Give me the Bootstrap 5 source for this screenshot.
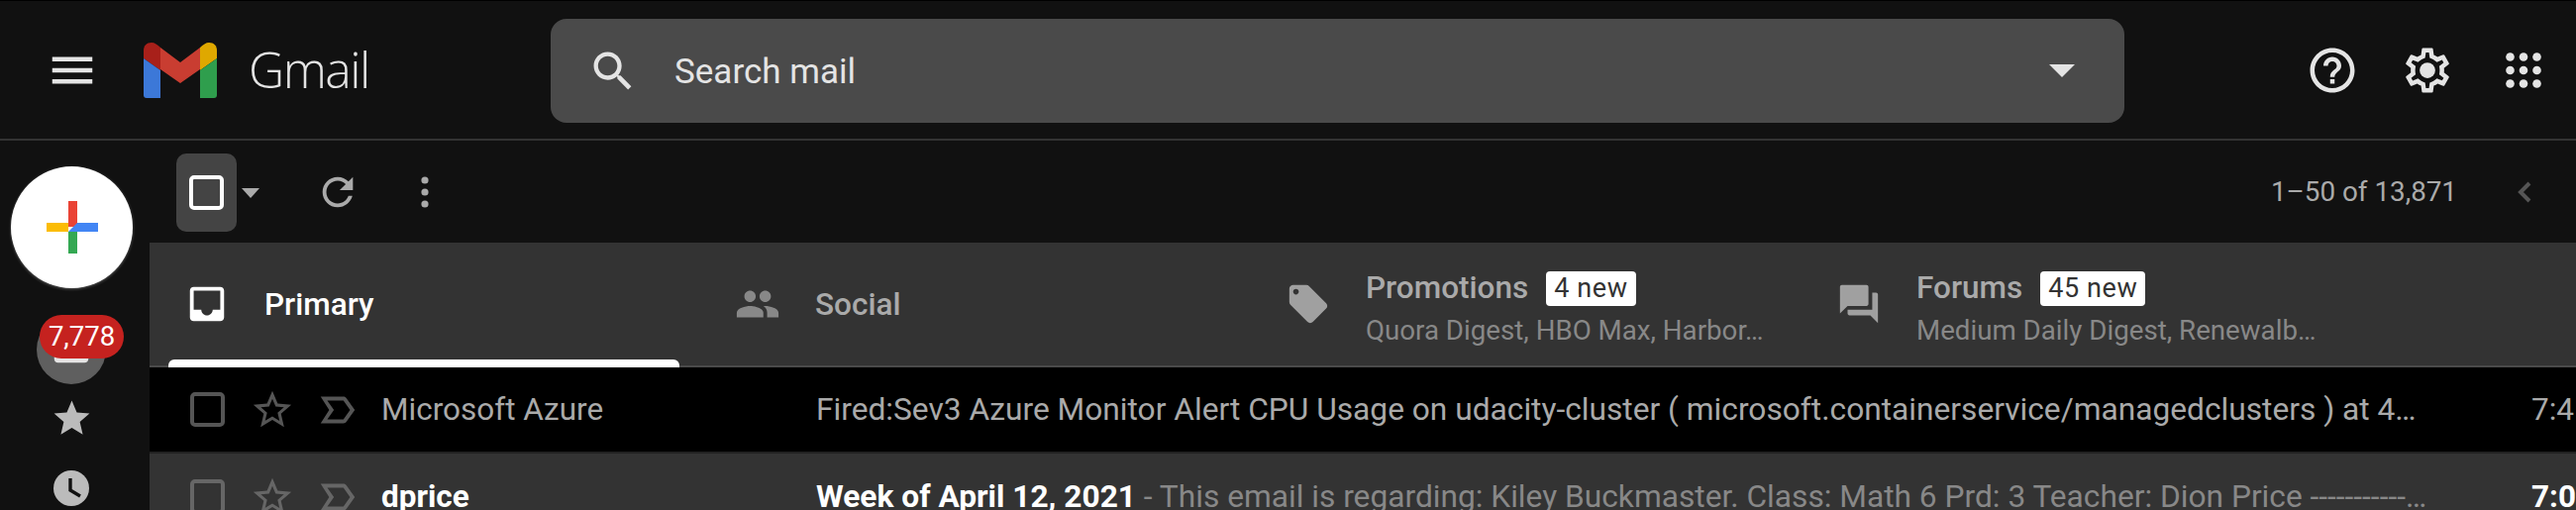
<!DOCTYPE html>
<html lang="en">
<head>
    <meta charset="UTF-8">
    <meta name="viewport" content="width=device-width, initial-scale=1.0">
    <title>Gmail</title>
    <link rel="stylesheet" href="https://cdn.jsdelivr.net/npm/bootstrap@5.3.0/dist/css/bootstrap.min.css">
    <style>
        html, body { height: 515px; overflow: hidden; }
        body { background: #111; font-family: Roboto, "Liberation Sans", sans-serif; color: #aaa; }
        svg { flex: none; display: block; }
        .top-bar { height: 142px; border-bottom: 2px solid #333; border-top: 1px solid #000; padding-left: 46px; }
        .brand-logo { margin-left: 45px; }
        .brand-name { margin-left: 32px; width: 305px; font-family: "Open Sans", sans-serif; font-size: 50px; font-weight: 300; letter-spacing: -1.5px; color: #e4e4e4; }
        .search-box { flex: none; width: 1589px; height: 105px; margin-top: 2px; background: #4a4a4a; border-radius: 16px; padding-left: 37px; padding-right: 50px; }
        .search-label { margin-left: 36px; padding-top: 3px; font-size: 35px; color: #e4e4e4; }
        .caret-down { width: 0; height: 0; border-left: 13px solid transparent; border-right: 13px solid transparent; border-top: 13px solid #e4e4e4; }
        .top-icons { margin-left: 183px; }
        .icon-gear { margin-left: 42px; }
        .icon-grid { margin-left: 52px; }
        .side-col { flex: none; width: 151px; }
        .compose-btn { width: 123px; height: 123px; margin: 26px 0 0 11px; border-radius: 50%; background: #fff; box-shadow: 0 1px 3px rgba(255,255,255,.3); }
        .side-inbox { width: 70px; height: 70px; margin: 27px 0 0 37px; border-radius: 50%; background: #5f5f5f; position: relative; }
        .count-pill { position: absolute; left: 3px; top: 0; width: 85px; height: 44px; border-radius: 22px; background: #c5221f; color: #fff; font-size: 27.5px; line-height: 44px; text-align: center; }
        .side-star { margin: 13px 0 0 51px; }
        .side-clock { margin: 31px 0 0 54px; }
        .mail-pane { min-width: 0; }
        .tool-bar { height: 103px; padding-right: 45px; }
        .select-wrap { width: 61px; height: 79px; margin: 13px 0 0 27px; background: #444; border-radius: 10px; }
        .caret-small { width: 0; height: 0; margin-left: 5px; margin-top: 2px; border-left: 9px solid transparent; border-right: 9px solid transparent; border-top: 10px solid #aaa; }
        .tool-refresh { margin-left: 56px; }
        .tool-dots { margin-left: 61px; }
        .page-count { font-size: 27.8px; color: #aaa; margin-right: 60px; }
        .tab-strip { height: 126px; background: #333; border-bottom: 2px solid #4a4a4a; }
        .tab-item { flex: none; width: 556px; height: 124px; padding-left: 41px; position: relative; color: #aaa; }
        .tab-item svg { margin-left: -6px; }
        .tab-text { position: absolute; left: 116px; top: 28px; }
        .tab-solo { top: 45px; }
        .tab-title { font-size: 31.5px; line-height: 36px; font-weight: 500; white-space: nowrap; }
        .tab-active .tab-title { color: #fff; }
        .tab-sub { font-size: 27.7px; line-height: 32px; margin-top: 9px; color: #888; white-space: nowrap; }
        .new-pill { display: inline-block; margin-left: 18px; padding: 0 8px; height: 35px; line-height: 35px; font-size: 27px; font-weight: 400; letter-spacing: .6px; background: #fff; color: #333; border-radius: 4px; vertical-align: 1px; }
        .tab-bar-line { position: absolute; left: 19px; bottom: -2px; width: 516px; height: 8px; background: #fff; border-radius: 6px 6px 0 0; }
        .mail-line { height: 87px; padding-left: 41px; font-size: 31.5px; white-space: nowrap; overflow: hidden; }
        .mail-read { background: #000; border-bottom: 2px solid #222; color: #aaa; }
        .mail-new { background: #333; color: #888; }
        .mail-new b { color: #fff; font-weight: 700; }
        .cell-star { margin-left: 25px; }
        .cell-mark { margin-left: 20px; }
        .cell-from { flex: none; margin-left: 21px; width: 439px; }
        .cell-subject { flex: none; width: 1732px; font-size: 31.7px; }
    </style>
</head>
<body>
    <header class="top-bar d-flex align-items-center">
        <svg width="54" height="54" viewBox="0 0 24 24" fill="#e4e4e4"><path d="M3 18h18v-2H3v2zm0-5h18v-2H3v2zm0-7v2h18V6H3z"/></svg>
        <svg class="brand-logo" width="74" height="56" viewBox="0 0 74 56">
            <path d="M17 5 37 20 57 5V27L37 41 17 27z" fill="#c93d31"/>
            <path d="M0 16V8C0 3 3 0 8 0 11 0 14 2 17 5V28z" fill="#a8201a"/>
            <path d="M74 16V8C74 3 71 0 66 0 63 0 60 2 57 5V28z" fill="#dfa800"/>
            <path d="M0 16 17 28V56H3C1 56 0 55 0 53z" fill="#3c78d8"/>
            <path d="M74 16 57 28V56H71C73 56 74 55 74 53z" fill="#2f9e4d"/>
        </svg>
        <div class="brand-name">Gmail</div>
        <div class="search-box d-flex align-items-center">
            <svg width="52" height="52" viewBox="0 0 24 24" fill="#e4e4e4"><path d="M15.5 14h-.79l-.28-.27C15.41 12.59 16 11.11 16 9.5 16 5.91 13.09 3 9.5 3S3 5.91 3 9.5 5.91 16 9.5 16c1.61 0 3.09-.59 4.23-1.57l.27.28v.79l5 4.99L20.49 19l-4.99-5zm-6 0C7.01 14 5 11.99 5 9.5S7.01 5 9.5 5 14 7.01 14 9.5 11.99 14 9.5 14z"/></svg>
            <span class="search-label flex-grow-1">Search mail</span>
            <span class="caret-down"></span>
        </div>
        <div class="top-icons d-flex align-items-center">
            <svg width="54" height="54" viewBox="0 0 24 24" fill="#e4e4e4"><path d="M11 18h2v-2h-2v2zm1-16C6.48 2 2 6.48 2 12s4.48 10 10 10 10-4.48 10-10S17.52 2 12 2zm0 18c-4.41 0-8-3.59-8-8s3.59-8 8-8 8 3.59 8 8-3.59 8-8 8zm0-14c-2.21 0-4 1.79-4 4h2c0-1.1.9-2 2-2s2 .9 2 2c0 2-3 1.75-3 5h2c0-2.25 3-2.5 3-5 0-2.21-1.79-4-4-4z"/></svg>
            <svg class="icon-gear" width="54" height="54" viewBox="0 0 24 24" fill="#e4e4e4"><path d="M19.43 12.98c.04-.32.07-.64.07-.98 0-.34-.03-.66-.07-.98l2.11-1.65c.19-.15.24-.42.12-.64l-2-3.46c-.09-.16-.26-.25-.44-.25-.06 0-.12.01-.17.03l-2.49 1c-.52-.4-1.08-.73-1.69-.98l-.38-2.65C14.46 2.18 14.25 2 14 2h-4c-.25 0-.46.18-.49.42l-.38 2.65c-.61.25-1.17.59-1.69.98l-2.49-1c-.06-.02-.12-.03-.18-.03-.17 0-.34.09-.43.25l-2 3.46c-.13.22-.07.49.12.64l2.11 1.65c-.04.32-.07.65-.07.98 0 .33.03.66.07.98l-2.11 1.65c-.19.15-.24.42-.12.64l2 3.46c.09.16.26.25.44.25.06 0 .12-.01.17-.03l2.49-1c.52.4 1.08.73 1.69.98l.38 2.65c.03.24.24.42.49.42h4c.25 0 .46-.18.49-.42l.38-2.65c.61-.25 1.17-.59 1.69-.98l2.49 1c.06.02.12.03.18.03.17 0 .34-.09.43-.25l2-3.46c.12-.22.07-.49-.12-.64l-2.11-1.65zm-1.98-1.71c.04.31.05.52.05.73 0 .21-.02.43-.05.73l-.14 1.13.89.7 1.08.84-.7 1.21-1.27-.51-1.04-.42-.9.68c-.43.32-.84.56-1.25.73l-1.06.43-.16 1.13-.2 1.35h-1.4l-.19-1.35-.16-1.13-1.06-.43c-.43-.18-.83-.41-1.23-.71l-.91-.7-1.06.43-1.27.51-.7-1.21 1.08-.84.89-.7-.14-1.13c-.03-.31-.05-.54-.05-.74s.02-.43.05-.73l.14-1.13-.89-.7-1.08-.84.7-1.21 1.27.51 1.04.42.9-.68c.43-.32.84-.56 1.25-.73l1.06-.43.16-1.13.2-1.35h1.39l.19 1.35.16 1.13 1.06.43c.43.18.83.41 1.23.71l.91.7 1.06-.43 1.27-.51.7 1.21-1.07.85-.89.7.14 1.13z"/><circle cx="12" cy="12" r="3.5"/></svg>
            <svg class="icon-grid" width="36" height="36" viewBox="0 0 36 36" fill="#e4e4e4"><circle cx="4.5" cy="4.5" r="4.3"/><circle cx="18" cy="4.5" r="4.3"/><circle cx="31.5" cy="4.5" r="4.3"/><circle cx="4.5" cy="18" r="4.3"/><circle cx="18" cy="18" r="4.3"/><circle cx="31.5" cy="18" r="4.3"/><circle cx="4.5" cy="31.5" r="4.3"/><circle cx="18" cy="31.5" r="4.3"/><circle cx="31.5" cy="31.5" r="4.3"/></svg>
        </div>
    </header>

    <div class="d-flex">
        <aside class="side-col">
            <div class="compose-btn d-flex align-items-center justify-content-center">
                <svg width="52" height="53" viewBox="0 0 52 53">
                    <path d="M22 0h9v26h-9z" fill="#ea4335"/>
                    <path d="M31 22h21v9H22z" fill="#4285f4"/>
                    <path d="M22 31h9v22h-9z" fill="#34a853"/>
                    <path d="M0 22h22v9H0z" fill="#fbbc05"/>
                </svg>
            </div>
            <div class="side-inbox d-flex justify-content-center">
                <svg class="mt-2" width="46" height="46" viewBox="0 0 24 24" fill="#e4e4e4"><path d="M19 3H4.99c-1.11 0-1.98.89-1.98 2L3 19c0 1.1.88 2 1.99 2H19c1.1 0 2-.9 2-2V5c0-1.11-.9-2-2-2zm0 12h-4c0 1.66-1.35 3-3 3s-3-1.34-3-3H4.99V5H19v10z"/></svg>
                <span class="count-pill">7,778</span>
            </div>
            <svg class="side-star" width="43" height="43" viewBox="0 0 24 24" fill="#bbb"><path d="M12 17.27L18.18 21l-1.64-7.03L22 9.24l-7.19-.61L12 2 9.19 8.63 2 9.24l5.46 4.73L5.82 21z"/></svg>
            <svg class="side-clock" width="36" height="36" viewBox="0 0 36 36"><circle cx="18" cy="18" r="18" fill="#bbb"/><path d="M17 8v12l10 6" fill="none" stroke="#111" stroke-width="3.4"/></svg>
        </aside>

        <main class="mail-pane flex-grow-1">
            <div class="tool-bar d-flex">
                <div class="select-wrap d-flex align-items-center justify-content-center">
                    <svg width="35" height="35" viewBox="0 0 35 35"><rect x="2" y="2" width="31" height="31" rx="3" fill="none" stroke="#fff" stroke-width="4"/></svg>
                </div>
                <div class="d-flex align-items-center flex-grow-1">
                    <span class="caret-small"></span>
                    <svg class="tool-refresh" width="46" height="46" viewBox="0 0 24 24" fill="#aaa"><path d="M17.65 6.35C16.2 4.9 14.21 4 12 4c-4.42 0-7.99 3.58-7.99 8s3.57 8 7.99 8c3.73 0 6.84-2.55 7.73-6h-2.08c-.82 2.33-3.04 4-5.65 4-3.31 0-6-2.69-6-6s2.69-6 6-6c1.66 0 3.14.69 4.22 1.78L13 11h7V4l-2.35 2.35z"/></svg>
                    <svg class="tool-dots" width="8" height="32" viewBox="0 0 8 32" fill="#aaa"><circle cx="4" cy="4" r="3.6"/><circle cx="4" cy="16" r="3.6"/><circle cx="4" cy="28" r="3.6"/></svg>
                    <span class="page-count ms-auto">1–50 of 13,871</span>
                    <svg width="15" height="22" viewBox="0 0 15 22"><path d="M13 2 4 11l9 9" fill="none" stroke="#555" stroke-width="4"/></svg>
                </div>
            </div>

            <div class="tab-strip d-flex">
                <div class="tab-item tab-active d-flex align-items-center">
                    <svg width="46" height="46" viewBox="0 0 24 24" fill="#fff"><path d="M19 3H4.99c-1.11 0-1.98.89-1.98 2L3 19c0 1.1.88 2 1.99 2H19c1.1 0 2-.9 2-2V5c0-1.11-.9-2-2-2zm0 12h-4c0 1.66-1.35 3-3 3s-3-1.34-3-3H4.99V5H19v10z"/></svg>
                    <div class="tab-text tab-solo"><div class="tab-title">Primary</div></div>
                    <span class="tab-bar-line"></span>
                </div>
                <div class="tab-item d-flex align-items-center">
                    <svg width="46" height="46" viewBox="0 0 24 24" fill="#888"><path d="M16 11c1.66 0 2.99-1.34 2.99-3S17.66 5 16 5c-1.66 0-3 1.34-3 3s1.34 3 3 3zm-8 0c1.66 0 2.99-1.34 2.99-3S9.66 5 8 5C6.34 5 5 6.34 5 8s1.34 3 3 3zm0 2c-2.33 0-7 1.17-7 3.5V19h14v-2.5c0-2.33-4.67-3.5-7-3.5zm8 0c-.29 0-.62.02-.97.05 1.16.84 1.97 1.97 1.97 3.45V19h6v-2.5c0-2.33-4.67-3.5-7-3.5z"/></svg>
                    <div class="tab-text tab-solo"><div class="tab-title">Social</div></div>
                </div>
                <div class="tab-item d-flex align-items-center">
                    <svg width="46" height="46" viewBox="0 0 24 24" fill="#a0a0a0"><path d="M21.41 11.58l-9-9C12.05 2.22 11.55 2 11 2H4c-1.1 0-2 .9-2 2v7c0 .55.22 1.05.59 1.42l9 9c.36.36.86.58 1.41.58.55 0 1.05-.22 1.41-.59l7-7c.37-.36.59-.86.59-1.41 0-.55-.23-1.06-.59-1.42zM5.5 7C4.67 7 4 6.33 4 5.5S4.67 4 5.5 4 7 4.67 7 5.5 6.33 7 5.5 7z"/></svg>
                    <div class="tab-text">
                        <div class="tab-title">Promotions<span class="new-pill">4 new</span></div>
                        <div class="tab-sub">Quora Digest, HBO Max, Harbor…</div>
                    </div>
                </div>
                <div class="tab-item d-flex align-items-center">
                    <svg width="46" height="46" viewBox="0 0 24 24" fill="#a0a0a0"><path d="M21 6h-2v9H6v2c0 .55.45 1 1 1h11l4 4V7c0-.55-.45-1-1-1zm-4 6V3c0-.55-.45-1-1-1H3c-.55 0-1 .45-1 1v14l4-4h10c.55 0 1-.45 1-1z"/></svg>
                    <div class="tab-text">
                        <div class="tab-title">Forums<span class="new-pill">45 new</span></div>
                        <div class="tab-sub">Medium Daily Digest, Renewalb…</div>
                    </div>
                </div>
            </div>

            <div class="mail-line mail-read d-flex align-items-center">
                <svg width="35" height="35" viewBox="0 0 35 35"><rect x="2" y="2" width="31" height="31" rx="3" fill="none" stroke="#555" stroke-width="4"/></svg>
                <svg class="cell-star" width="46" height="46" viewBox="0 0 24 24" fill="#555"><path d="M22 9.24l-7.19-.62L12 2 9.19 8.63 2 9.24l5.46 4.73L5.82 21 12 17.27 18.18 21l-1.63-7.03L22 9.24zM12 15.4l-3.76 2.27 1-4.28-3.32-2.88 4.38-.38L12 6.1l1.71 4.04 4.38.38-3.32 2.88 1 4.28L12 15.4z"/></svg>
                <svg class="cell-mark" width="46" height="46" viewBox="0 0 24 24" fill="#555"><path d="M15 19H3l4.5-7L3 5h12c.65 0 1.26.31 1.63.84L21 12l-4.37 6.16c-.37.52-.98.84-1.63.84zm-8.5-2H15l3.5-5L15 7H6.5l3.5 5-3.5 5z"/></svg>
                <span class="cell-from">Microsoft Azure</span>
                <span class="cell-subject">Fired:Sev3 Azure Monitor Alert CPU Usage on udacity-cluster ( microsoft.containerservice/managedclusters ) at 4…</span>
                <span class="cell-time">7:41</span>
            </div>
            <div class="mail-line mail-new d-flex align-items-center">
                <svg width="35" height="35" viewBox="0 0 35 35"><rect x="2" y="2" width="31" height="31" rx="3" fill="none" stroke="#666" stroke-width="4"/></svg>
                <svg class="cell-star" width="46" height="46" viewBox="0 0 24 24" fill="#666"><path d="M22 9.24l-7.19-.62L12 2 9.19 8.63 2 9.24l5.46 4.73L5.82 21 12 17.27 18.18 21l-1.63-7.03L22 9.24zM12 15.4l-3.76 2.27 1-4.28-3.32-2.88 4.38-.38L12 6.1l1.71 4.04 4.38.38-3.32 2.88 1 4.28L12 15.4z"/></svg>
                <svg class="cell-mark" width="46" height="46" viewBox="0 0 24 24" fill="#666"><path d="M15 19H3l4.5-7L3 5h12c.65 0 1.26.31 1.63.84L21 12l-4.37 6.16c-.37.52-.98.84-1.63.84zm-8.5-2H15l3.5-5L15 7H6.5l3.5 5-3.5 5z"/></svg>
                <span class="cell-from"><b>dprice</b></span>
                <span class="cell-subject"><b>Week of April 12, 2021</b> - This email is regarding: Kiley Buckmaster. Class: Math 6 Prd: 3 Teacher: Dion Price -----------…</span>
                <span class="cell-time"><b>7:01</b></span>
            </div>
        </main>
    </div>

    <script src="https://cdn.jsdelivr.net/npm/bootstrap@5.3.0/dist/js/bootstrap.bundle.min.js"></script>
</body>
</html>
